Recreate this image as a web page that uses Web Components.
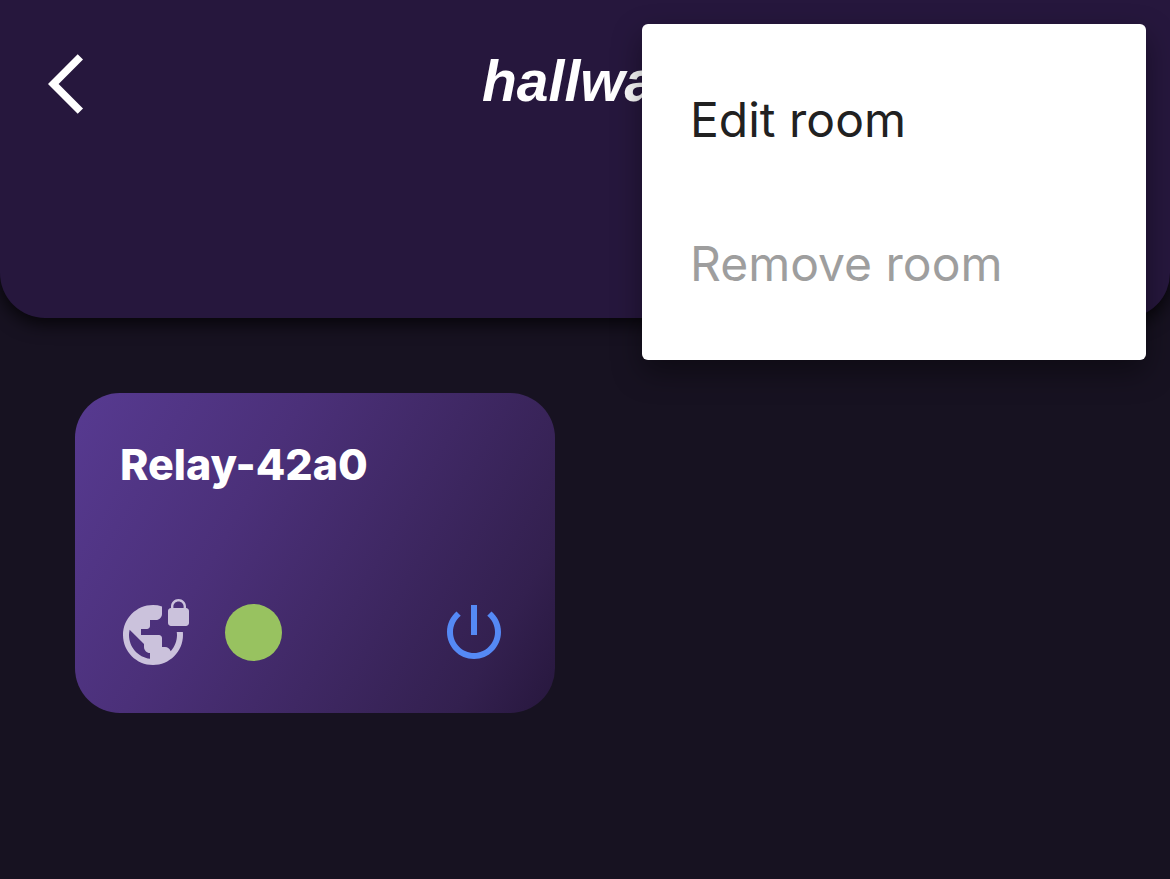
<!DOCTYPE html>
<html lang="en">
<head>
<meta charset="utf-8">
<meta name="viewport" content="width=device-width, initial-scale=1">
<title>hallway</title>
<style>
  body { margin: 0; background: #171221; font-family: Inter, sans-serif; }
</style>
</head>
<body>
<room-page>
  <room-header slot="header">hallway</room-header>
  <room-menu slot="menu">
    <menu-entry>Edit room</menu-entry>
    <menu-entry disabled>Remove room</menu-entry>
  </room-menu>
  <device-card>Relay-42a0</device-card>
</room-page>
<script>
  const define = (name, html, setup) => {
    const template = document.createElement('template');
    template.innerHTML = html;
    customElements.define(name, class extends HTMLElement {
      constructor() {
        super();
        this.attachShadow({ mode: 'open' }).append(template.content.cloneNode(true));
      }
      connectedCallback() { if (setup) setup(this); }
    });
  };

  define('room-page', `
    <style>
      :host { display: block; position: relative; min-height: 100vh; }
      main {
        display: grid;
        grid-template-columns: repeat(2, 1fr);
        gap: 60px;
        padding: 75px;
      }
      ::slotted(room-menu) { position: absolute; top: 24px; right: 24px; }
    </style>
    <slot name="header"></slot>
    <main><slot></slot></main>
    <slot name="menu"></slot>`);

  define('room-header', `
    <style>
      :host { display: block; }
      header {
        box-sizing: border-box;
        display: grid;
        grid-template-columns: 72px 1fr 72px;
        align-items: start;
        min-height: 318px;
        padding: 48px;
        color: #fff;
        background: #26173d;
        border-radius: 0 0 45px 45px;
        box-shadow: 0 6px 18px rgba(0, 0, 0, .75);
      }
      button {
        width: 72px;
        height: 72px;
        padding: 0;
        border: 0;
        color: inherit;
        background: none;
      }
      svg { display: block; width: 72px; height: 72px; fill: currentColor; }
      h1 {
        margin: 0;
        font: italic 700 57px/66px "Liberation Sans", sans-serif;
        text-align: center;
      }
    </style>
    <header>
      <button type="button" aria-label="Back">
        <svg viewBox="0 0 24 24" aria-hidden="true"><path d="M11.67 3.87 9.9 2.1 0 12l9.9 9.9 1.77-1.77L3.54 12z"/></svg>
      </button>
      <h1><slot></slot></h1>
    </header>`);

  define('room-menu', `
    <style>
      :host {
        box-sizing: border-box;
        display: block;
        width: 504px;
        max-width: calc(100% - 48px);
        padding: 24px 0;
        background: #fff;
        border-radius: 6px;
        box-shadow: 0 12px 30px rgba(0, 0, 0, .4);
      }
    </style>
    <div role="menu"><slot></slot></div>`);

  define('menu-entry', `
    <style>
      :host { display: block; }
      button {
        display: block;
        width: 100%;
        height: 144px;
        padding: 0 48px;
        border: 0;
        background: none;
        color: #212121;
        font: 400 48px/60px Inter, sans-serif;
        text-align: left;
      }
      button:disabled { color: #9e9e9e; }
    </style>
    <button type="button" role="menuitem"><slot></slot></button>`,
    host => { host.shadowRoot.querySelector('button').disabled = host.hasAttribute('disabled'); });

  define('device-card', `
    <style>
      :host { display: block; }
      article {
        box-sizing: border-box;
        display: flex;
        flex-direction: column;
        justify-content: space-between;
        min-height: 320px;
        padding: 45px;
        color: #fff;
        background: linear-gradient(120deg, #573a91, #4b3079 35%, #33204f 85%, #27173d);
        border-radius: 45px;
      }
      h2 { margin: 0; font: 800 43px/52px Inter, sans-serif; }
      .row { display: flex; align-items: center; gap: 33px; }
      svg { display: block; width: 72px; height: 72px; fill: currentColor; }
      .network { color: #cbc2dc; }
      .status { width: 57px; height: 57px; border-radius: 50%; background: #98c260; }
      button { margin-left: auto; padding: 0; border: 0; background: none; color: #5589f5; }
    </style>
    <article>
      <h2><slot></slot></h2>
      <div class="row">
        <svg class="network" viewBox="0 0 24 24" role="img" aria-label="Secure network"><path d="M22 4v-.5C22 2.12 20.88 1 19.5 1S17 2.12 17 3.5V4c-.55 0-1 .45-1 1v4c0 .55.45 1 1 1h5c.55 0 1-.45 1-1V5c0-.55-.45-1-1-1zm-.8 0h-3.4v-.5c0-.94.76-1.7 1.7-1.7s1.7.76 1.7 1.7V4zm-2.28 8c.04.33.08.66.08 1 0 2.08-.8 3.97-2.1 5.39-.26-.81-1-1.39-1.9-1.39h-1v-3c0-.55-.45-1-1-1H7v-2h2c.55 0 1-.45 1-1V8h2c1.1 0 2-.9 2-2V3.46c-.95-.3-1.95-.46-3-.46C5.48 3 1 7.48 1 13s4.48 10 10 10 10-4.48 10-10c0-.34-.02-.67-.05-1h-2.03zM10 20.93c-3.95-.49-7-3.85-7-7.93 0-.62.08-1.21.21-1.79L8 16v1c0 1.1.9 2 2 2v1.93z"/></svg>
        <span class="status" role="img" aria-label="Online"></span>
        <button type="button" aria-label="Toggle power">
          <svg viewBox="0 0 24 24" aria-hidden="true"><path d="M13 3h-2v10h2V3zm4.83 2.17-1.42 1.42C17.99 7.86 19 9.81 19 12c0 3.87-3.13 7-7 7s-7-3.13-7-7c0-2.19 1.01-4.14 2.58-5.42L6.17 5.17C4.23 6.82 3 9.26 3 12c0 4.97 4.03 9 9 9s9-4.03 9-9c0-2.74-1.23-5.18-3.17-6.83z"/></svg>
        </button>
      </div>
    </article>`);
</script>
</body>
</html>
